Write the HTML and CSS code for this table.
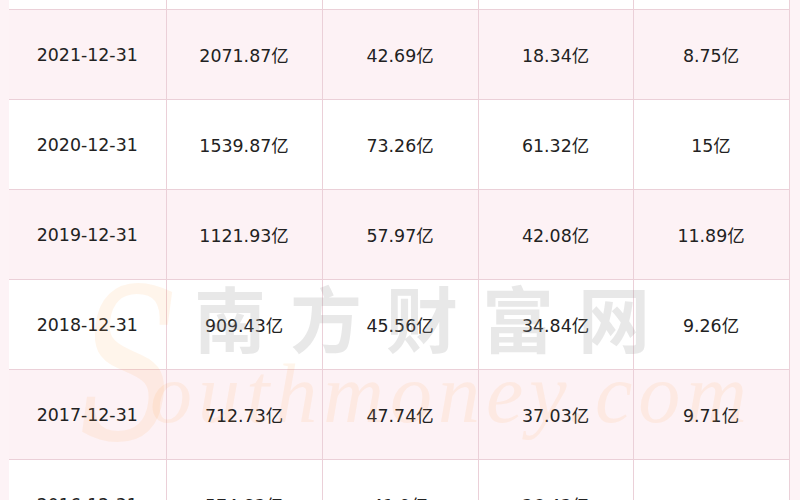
FILE: index.html
```html
<!DOCTYPE html>
<html lang="zh-CN">
<head>
<meta charset="utf-8">
<title>财务数据</title>
<link rel="stylesheet" href="styles.css">
</head>
<body>
<div class="page">
  <table class="data">
    <colgroup>
      <col class="c1"><col class="c2"><col class="c3"><col class="c4"><col class="c5">
    </colgroup>
    <tr class="stub"><td></td><td></td><td></td><td></td><td></td></tr>
    <tr class="pink"><td>2021-12-31</td><td>2071.87亿</td><td>42.69亿</td><td>18.34亿</td><td>8.75亿</td></tr>
    <tr><td>2020-12-31</td><td>1539.87亿</td><td>73.26亿</td><td>61.32亿</td><td>15亿</td></tr>
    <tr class="pink"><td>2019-12-31</td><td>1121.93亿</td><td>57.97亿</td><td>42.08亿</td><td>11.89亿</td></tr>
    <tr><td>2018-12-31</td><td>909.43亿</td><td>45.56亿</td><td>34.84亿</td><td>9.26亿</td></tr>
    <tr class="pink"><td>2017-12-31</td><td>712.73亿</td><td>47.74亿</td><td>37.03亿</td><td>9.71亿</td></tr>
    <tr><td>2016-12-31</td><td>574.83亿</td><td>41.9亿</td><td>36.43亿</td><td></td></tr>
  </table>
  <div class="wm-cn">南方财富网</div>
  <div class="wm-s">S</div>
  <div class="wm-en">outhmoney.com</div>
</div>
</body>
</html>
```
FILE: styles.css
```css
html, body {
  margin: 0;
  padding: 0;
  background: #fdf3f6;
  overflow: hidden;
}
.page {
  position: relative;
  width: 800px;
  height: 500px;
  overflow: hidden;
  padding-left: 9px;
  box-sizing: border-box;
}
.data {
  border-collapse: collapse;
  table-layout: fixed;
  width: 780px;
  font-family: "DejaVu Sans", "Noto Sans CJK SC", sans-serif;
  font-size: 17.4px;
  color: #222;
  background: #fff;
}
.c1 { width: 157px; }
.c2 { width: 156px; }
.c3 { width: 156px; }
.c4 { width: 155px; }
.c5 { width: 156px; }
.data td {
  height: 89px;
  padding: 0;
  text-align: center;
  vertical-align: middle;
  border: 1px solid #ebd0d8;
}
.data tr td:first-child {
  border-left: none;
}
.data tr.stub td {
  height: 9px;
  border-top: none;
}
.data tr.pink td {
  background: #fdf2f5;
}
.wm-cn {
  position: absolute;
  left: 194px;
  top: 280px;
  font-family: "Noto Sans CJK SC", sans-serif;
  font-weight: 700;
  font-size: 72px;
  letter-spacing: 24px;
  line-height: 1;
  color: rgba(150, 150, 150, 0.22);
  white-space: nowrap;
  pointer-events: none;
}
.wm-s {
  position: absolute;
  left: 78px;
  top: 262px;
  font-family: "DejaVu Serif", serif;
  font-style: italic;
  font-size: 210px;
  line-height: 1;
  color: rgba(255, 170, 90, 0.12);
  transform: scaleX(0.7);
  transform-origin: left top;
  pointer-events: none;
}
.wm-en {
  position: absolute;
  left: 150px;
  top: 352px;
  font-family: "Liberation Serif", serif;
  font-style: italic;
  font-size: 84px;
  letter-spacing: 6px;
  line-height: 1;
  color: rgba(255, 170, 90, 0.12);
  white-space: nowrap;
  pointer-events: none;
}
```
